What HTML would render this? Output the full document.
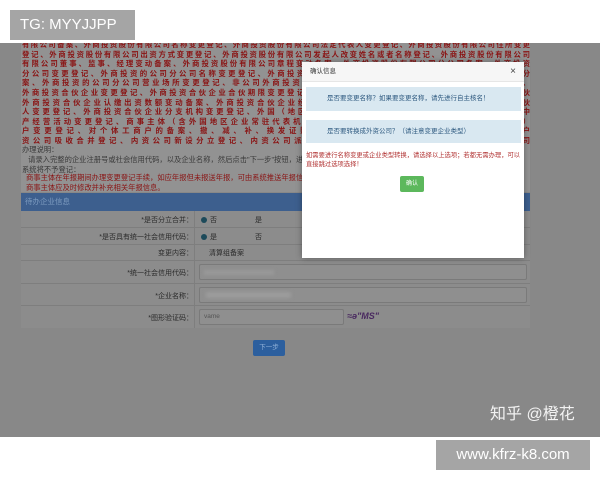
<!DOCTYPE html>
<html><head><meta charset="utf-8"><style>
*{margin:0;padding:0;box-sizing:border-box}
body{width:600px;height:480px;background:#fff;position:relative;overflow:hidden;font-family:"Liberation Sans","Noto Sans CJK SC",sans-serif}
.a{position:absolute}
#img{left:0;top:43px;width:600px;height:394px;background:#888;overflow:hidden}
.red{color:#8a1414;font-size:7.4px;line-height:9.6px;font-weight:bold}
.red div{white-space:nowrap;overflow:hidden;text-align:justify;text-align-last:justify;width:508px;height:9.6px}
.dk{color:#3a3a3a;font-size:7.3px;line-height:10px;white-space:nowrap}
.row{position:absolute;left:21px;width:509px;border-bottom:1px solid #7e7e7e;background:#8c8c8c}
.lab{position:absolute;left:0;width:172px;text-align:right;font-size:7px;color:#2a2a2a}
.val{position:absolute;left:173px;right:0;top:0;bottom:0;border-left:1px solid #7e7e7e}
.inp{position:absolute;left:4px;top:3px;height:16px;border:1px solid #7a7a7a;background:#8f8f8f;border-radius:2px}
.chk{display:inline-block;width:6px;height:6px;border-radius:50%;background:#1d4a5a;margin-right:3px;vertical-align:middle}
</style></head><body>
<div class="a" style="left:10px;top:10px;width:125px;height:30px;background:#a5a5a5;color:#fff;font-size:15px;line-height:30px;padding-left:10px">TG: MYYJJPP</div>
<div id="img" class="a">
 <div class="a" style="left:21px;top:0;width:509px;height:149px;background:#929292"></div>
 <div class="a red" style="left:22px;top:-3px">
 <div>有限公司备案、外商投资股份有限公司名称变更登记、外商投资股份有限公司法定代表人变更登记、外商投资股份有限公司住所变更</div>
 <div>登记、外商投资股份有限公司出资方式变更登记、外商投资股份有限公司发起人改变姓名或者名称登记、外商投资股份有限公司</div>
 <div>有限公司董事、监事、经理变动备案、外商投资股份有限公司章程变动备案、外商投资股份有限公司分公司备案、外商投资</div>
 <div>分公司变更登记、外商投资的公司分公司名称变更登记、外商投资的公司分公司营业期限变更登记、外商投资的公司分</div>
 <div>案、外商投资的公司分公司营业场所变更登记、非公司外商投资企业备案、非公司外商投资企业分支机构变更登记、</div>
 <div>外商投资合伙企业变更登记、外商投资合伙企业合伙期限变更登记、外商投资合伙企业合伙人变更登记、外商投资合伙</div>
 <div>外商投资合伙企业认缴出资数额变动备案、外商投资合伙企业经营场所变更登记、外商投资合伙企业执行事务合伙</div>
 <div>人变更登记、外商投资合伙企业分支机构变更登记、外国（地区）企业常驻代表机构备案、外国（地区）企业在中</div>
 <div>产经营活动变更登记、商事主体（含外国地区企业常驻代表机构、外国地区企业在中国境内从事生产经营活动）</div>
 <div>户变更登记、对个体工商户的备案、撤、减、补、换发证照、个体工商户字号名称变更登记、个体工商户</div>
 <div>资公司吸收合并登记、内资公司新设分立登记、内资公司派生分立登记、内资公司新设合并登记、内资公司</div></div>
 <div class="a dk" style="left:22px;top:102px">办理说明：<br>&nbsp;&nbsp;&nbsp;请录入完整的企业注册号或社会信用代码，以及企业名称，然后点击"下一步"按钮，进行变更登记<br>系统将不予登记：</div>
 <div class="a" style="left:26px;top:130px;color:#8a1414;font-size:7.3px;line-height:10px;white-space:nowrap">商事主体在年报期间办理变更登记手续，如应年报但未报送年报，可由系统推送年报信息。<br>商事主体应及时修改并补充相关年报信息。</div>
 <div class="a" style="left:21px;top:150px;width:509px;height:18px;background:#3d5f8e;color:#7e9cc0;font-size:7.5px;line-height:18px;padding-left:4px">待办企业信息</div>
 <div class="row" style="top:168px;height:17px"><div class="lab" style="top:4px">*是否分立合并：</div><div class="val" style="font-size:7px;color:#2a2a2a;padding:4px 6px"><span class="chk"></span>否<span style="margin-left:38px">是</span></div></div>
 <div class="row" style="top:185px;height:17px"><div class="lab" style="top:4px">*是否具有统一社会信用代码：</div><div class="val" style="font-size:7px;color:#2a2a2a;padding:4px 6px"><span class="chk"></span>是<span style="margin-left:38px">否</span></div></div>
 <div class="row" style="top:202px;height:16px"><div class="lab" style="top:3px">变更内容：</div><div class="val" style="font-size:7px;color:#2a2a2a;padding:3px 14px">清算组备案</div></div>
 <div class="row" style="top:218px;height:23px"><div class="lab" style="top:7px">*统一社会信用代码：</div><div class="val"><div class="inp" style="right:3px"><div style="margin:5px 4px;width:70px;height:5px;background:#999;filter:blur(1.5px)"></div></div></div></div>
 <div class="row" style="top:241px;height:22px"><div class="lab" style="top:7px">*企业名称：</div><div class="val"><div class="inp" style="right:3px"><div style="margin:4px 6px;width:85px;height:6px;background:#9c9c9c;filter:blur(1.5px)"></div></div></div></div>
 <div class="row" style="top:263px;height:22px;border-bottom:none"><div class="lab" style="top:7px">*图形验证码：</div><div class="val"><div class="inp" style="width:145px;font-size:6.5px;color:#555;padding:3px 4px">vame</div><div class="a" style="left:152px;top:5px;font-size:9px;color:#4a2a60;font-style:italic;font-weight:bold">≈ə"MS"</div></div></div>
 <div class="a" style="left:253px;top:297px;width:32px;height:16px;background:#2c5f9e;color:#8fb0d8;font-size:6.5px;text-align:center;line-height:16px;border-radius:2px">下一步</div>
 <div class="a" style="left:490px;top:357px;color:#f2f2f2;font-size:16px">知乎 @橙花</div>
 <div class="a" style="left:302px;top:19px;width:222px;height:196px;background:#fff;box-shadow:0 0 6px rgba(0,0,0,.35)">
  <div class="a" style="left:0;top:0;width:222px;height:20px;background:#f6f6f6;border-bottom:1px solid #e6e6e6;font-size:6.5px;color:#333;line-height:20px;padding-left:8px">确认信息<span style="position:absolute;right:8px;font-size:10px;color:#444">×</span></div>
  <div class="a" style="left:4px;top:25px;width:215px;height:24px;background:#d9e8f1;font-size:6.5px;color:#2f5a80;line-height:24px;padding-left:21px">是否要变更名称？如果要变更名称，请先进行自主核名！</div>
  <div class="a" style="left:4px;top:58px;width:215px;height:23px;background:#d9e8f1;font-size:6.5px;color:#2f5a80;line-height:23px;padding-left:21px">是否要转换成外资公司？（请注意变更企业类型）</div>
  <div class="a" style="left:4px;top:89px;width:216px;font-size:6.3px;line-height:9px;color:#b03030">如需要进行名称变更或企业类型转换，请选择以上选项；若都无需办理，可以直接跳过选项选择！</div>
  <div class="a" style="left:98px;top:114px;width:24px;height:16px;background:#5cb85c;color:#fff;font-size:6px;text-align:center;line-height:16px;border-radius:2px">确认</div>
 </div>
</div>
<div class="a" style="left:436px;top:440px;width:154px;height:30px;background:#a5a5a5;color:#fff;font-size:15px;line-height:30px;text-align:center">www.kfrz-k8.com</div>
</body></html>
